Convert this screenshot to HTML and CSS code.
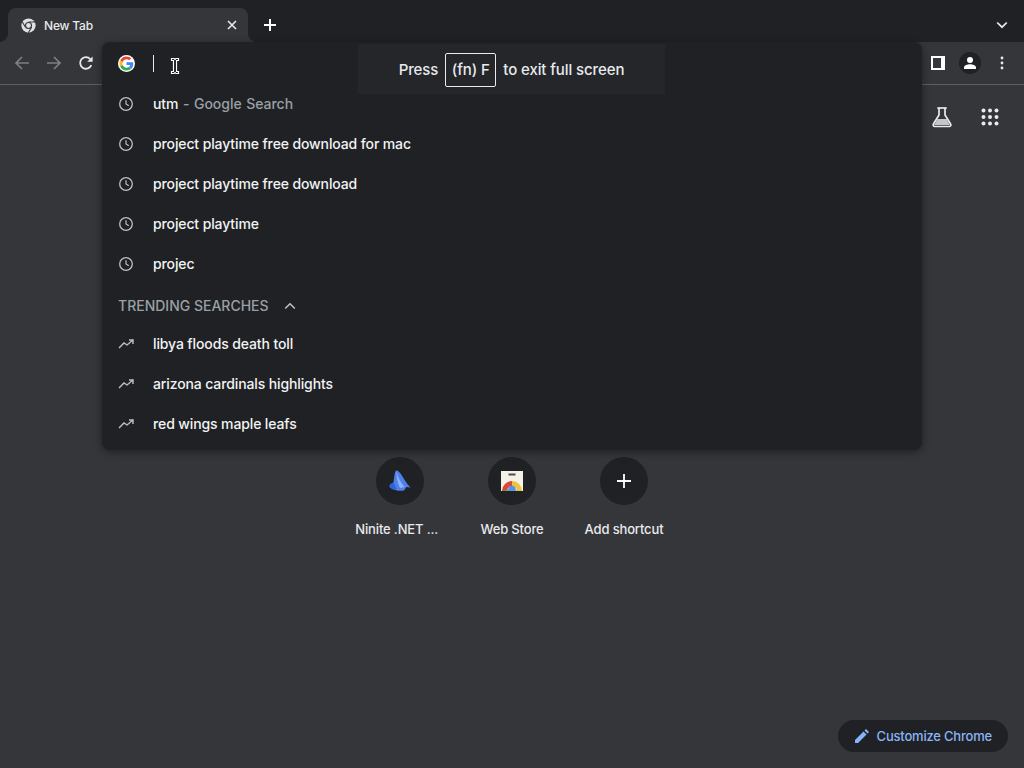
FILE: index.html
```html
<!DOCTYPE html>
<html lang="en">
<head>
<meta charset="utf-8">
<title>New Tab</title>
<link rel="stylesheet" href="styles.css">
</head>
<body>
<div class="app">
  <header class="tabstrip">
    <div class="tab">
      <svg class="tab-icon" viewBox="0 0 16 16" width="15" height="15"><circle cx="8" cy="8" r="7.6" fill="#dfe1e4"/><circle cx="8" cy="8" r="3.8" fill="#35363a"/><circle cx="8" cy="8" r="2.6" fill="#dfe1e4"/><path d="M8 4.200h7M4.700 9.900 1.300 4M11.300 9.900 7.800 15.800" stroke="#35363a" stroke-width="1.100" fill="none"/></svg>
      <span class="tab-title">New Tab</span>
      <svg class="tab-close" viewBox="0 0 10 10" width="10" height="10"><path d="M1 1l8 8M9 1l-8 8" stroke="#e8eaed" stroke-width="1.600"/></svg>
    </div>
    <svg class="new-tab" viewBox="0 0 14 14" width="14" height="14"><path d="M7 1v12M1 7h12" stroke="#fff" stroke-width="2"/></svg>
    <svg class="tab-menu" viewBox="0 0 12 8" width="12" height="8"><path d="M1.200 1.500 6 6.200l4.800-4.700" stroke="#e8eaed" stroke-width="1.700" fill="none"/></svg>
  </header>

  <nav class="toolbar">
    <div class="nav-buttons">
      <svg viewBox="0 0 16 16" width="16" height="16"><path d="M15 8H2M8 2 2 8l6 6" stroke="#7d7f83" stroke-width="1.700" fill="none"/></svg>
      <svg viewBox="0 0 16 16" width="16" height="16"><path d="M1 8h13M8 2l6 6-6 6" stroke="#7d7f83" stroke-width="1.700" fill="none"/></svg>
      <svg viewBox="0 0 16 16" width="16" height="16"><path d="M13.300 10.200A5.800 5.800 0 1 1 12.200 4" stroke="#e8eaed" stroke-width="1.800" fill="none"/><path d="M14.600 1.400v5.400H9.200z" fill="#e8eaed"/></svg>
    </div>
    <div class="toolbar-right">
      <svg viewBox="0 0 14 14" width="14" height="14"><path d="M0 0h14v14H0zM2 2v10h8V2z" fill="#fff" fill-rule="evenodd"/></svg>
      <span class="avatar">
        <svg viewBox="0 0 14 14" width="14" height="14"><circle cx="7" cy="4" r="3" fill="#fff"/><path d="M1 13v-1.500C1 9.300 4.500 8.200 7 8.200s6 1.100 6 3.300V13z" fill="#fff"/></svg>
      </span>
      <svg class="kebab" viewBox="0 0 4 14" width="4" height="14"><circle cx="2" cy="2" r="1.400" fill="#e8eaed"/><circle cx="2" cy="7" r="1.400" fill="#e8eaed"/><circle cx="2" cy="12" r="1.400" fill="#e8eaed"/></svg>
    </div>
  </nav>

  <main class="ntp">
    <div class="ntp-top">
      <svg viewBox="0 0 22 22" width="22" height="22"><path d="M8 2v7L2.400 18a1.600 1.600 0 0 0 1.400 2.500h14.400a1.600 1.600 0 0 0 1.400-2.500L14 9V2" fill="none" stroke="#e8eaed" stroke-width="1.700"/><path d="M6.300 2h9.400" stroke="#e8eaed" stroke-width="1.700"/><path d="M6.300 13h9.400l3 6H3.200z" fill="#c4c6c9"/></svg>
      <svg class="apps" viewBox="0 0 18 18" width="18" height="18"><g fill="#e8eaed"><circle cx="2.500" cy="2.500" r="2"/><circle cx="9" cy="2.500" r="2"/><circle cx="15.500" cy="2.500" r="2"/><circle cx="2.500" cy="9" r="2"/><circle cx="9" cy="9" r="2"/><circle cx="15.500" cy="9" r="2"/><circle cx="2.500" cy="15.500" r="2"/><circle cx="9" cy="15.500" r="2"/><circle cx="15.500" cy="15.500" r="2"/></g></svg>
    </div>
    <div class="shortcuts">
      <div class="shortcut">
        <span class="shortcut-circle">
          <svg viewBox="0 0 24 24" width="24" height="24"><path d="M8 1.500c1.500-.5 3.500 1 5.500 4.500 2.500 4 5 8.500 9 12.500l-4-.5-2.500 3.500c-3 .5-6 .5-8.500-.5C5 20.500 1.500 19 1.500 17c0-1.500 2-2.500 4-3.500C6 9.500 6.500 4 8 1.500z" fill="#4f7fe8"/><path d="M8.500 2c1 5 3.500 11 8 16l-4.500 1C9.500 14 8.500 8 8.500 2z" fill="#8fb2f5"/><path d="M1.500 17c1-1.500 2.500-2.500 4-3.500l3 6.500-1 .8C5 20 1.500 19 1.500 17z" fill="#2f62d8"/></svg>
        </span>
        <span class="shortcut-label">Ninite .NET ...&nbsp;&nbsp;</span>
      </div>
      <div class="shortcut">
        <span class="shortcut-circle">
          <svg viewBox="0 0 22 20" width="22" height="20"><path d="M0 0h22v20H0z" fill="#f4f1e8"/><path d="M7.500 2.500h7v2h-7z" fill="#4a4a4a"/><path d="M1 20a10 10 0 0 1 10-10v5a5 5 0 0 0-5 5z" fill="#d9483b"/><path d="M11 10a10 10 0 0 1 10 10h-5a5 5 0 0 0-5-5z" fill="#f0c33c"/><path d="M3 20l4-2 1 2z" fill="#4caf50"/><circle cx="11" cy="18.500" r="3.800" fill="#5b8def"/><path d="M5 19.500h12V20H5z" fill="#6bb26e"/></svg>
        </span>
        <span class="shortcut-label">Web Store</span>
      </div>
      <div class="shortcut">
        <span class="shortcut-circle">
          <svg viewBox="0 0 14 14" width="14" height="14"><path d="M7 0v14M0 7h14" stroke="#fff" stroke-width="1.800"/></svg>
        </span>
        <span class="shortcut-label">Add shortcut</span>
      </div>
    </div>
    <div class="customize">
      <svg viewBox="0 0 14 14" width="14" height="14"><path d="M0 14v-3L8.500 2.500l3 3L3 14zM9.500 1.500 11 0l3 3-1.500 1.500z" fill="#8ab4f8"/></svg>
      <span>Customize Chrome</span>
    </div>
  </main>

  <section class="omnibox">
    <div class="omni-input">
      <svg class="g-logo" viewBox="-5 -5 58 58" width="17" height="17"><circle cx="24" cy="24" r="29" fill="#fff"/><path fill="#EA4335" d="M24 9.500c3.540 0 6.710 1.220 9.210 3.600l6.850-6.850C35.900 2.380 30.470 0 24 0 14.620 0 6.510 5.380 2.560 13.220l7.980 6.190C12.430 13.720 17.740 9.500 24 9.500z"/><path fill="#4285F4" d="M46.980 24.550c0-1.570-.15-3.090-.38-4.550H24v9.020h12.940c-.58 2.960-2.260 5.480-4.780 7.180l7.730 6c4.510-4.180 7.090-10.360 7.090-17.650z"/><path fill="#FBBC05" d="M10.530 28.590c-.48-1.450-.76-2.990-.76-4.590s.27-3.140.76-4.590l-7.980-6.190C.92 16.460 0 20.120 0 24c0 3.880.92 7.540 2.560 10.780l7.970-6.190z"/><path fill="#34A853" d="M24 48c6.480 0 11.930-2.130 15.890-5.810l-7.730-6c-2.150 1.450-4.920 2.300-8.160 2.300-6.260 0-11.570-4.220-13.470-9.910l-7.980 6.190C6.510 42.620 14.620 48 24 48z"/></svg>
      <span class="caret"></span>
    </div>
    <ul class="results">
      <li class="result"><svg class="clock" viewBox="0 0 16 16" width="16" height="16"><use href="#clock-shape"/></svg><span>utm <span class="dim">- Google Search</span></span></li>
      <li class="result"><svg class="clock" viewBox="0 0 16 16" width="16" height="16"><use href="#clock-shape"/></svg><span>project playtime free download for mac</span></li>
      <li class="result"><svg class="clock" viewBox="0 0 16 16" width="16" height="16"><use href="#clock-shape"/></svg><span>project playtime free download</span></li>
      <li class="result"><svg class="clock" viewBox="0 0 16 16" width="16" height="16"><use href="#clock-shape"/></svg><span>project playtime</span></li>
      <li class="result"><svg class="clock" viewBox="0 0 16 16" width="16" height="16"><use href="#clock-shape"/></svg><span>projec</span></li>
    </ul>
    <div class="section-head">
      <span>TRENDING SEARCHES</span>
      <svg viewBox="0 0 12 8" width="12" height="8"><path d="M1.200 6.500 6 1.800l4.800 4.700" stroke="#bdc1c6" stroke-width="1.600" fill="none"/></svg>
    </div>
    <ul class="results">
      <li class="result"><svg class="trend" viewBox="0 0 16 16" width="16" height="16"><use href="#trend-shape"/></svg><span>libya floods death toll</span></li>
      <li class="result"><svg class="trend" viewBox="0 0 16 16" width="16" height="16"><use href="#trend-shape"/></svg><span>arizona cardinals highlights</span></li>
      <li class="result"><svg class="trend" viewBox="0 0 16 16" width="16" height="16"><use href="#trend-shape"/></svg><span>red wings maple leafs</span></li>
    </ul>
  </section>

  <svg class="cursor" viewBox="0 0 10 18" width="10" height="18"><path d="M1.500 1.500h2.500L5 2.500l1-1h2.500v2H6.500v11h2v2H6l-1-1-1 1H1.500v-2h2v-11h-2z" fill="#111" stroke="#fff" stroke-width="1.200"/></svg>

  <div class="toast">
    <span>Press</span>
    <span class="key">(fn) F</span>
    <span>to exit full screen</span>
  </div>
</div>

<svg class="defs" width="0" height="0" aria-hidden="true">
  <defs>
    <g id="clock-shape"><circle cx="8" cy="8" r="6.300" fill="none" stroke="#bdc1c6" stroke-width="1.300"/><path d="M8 4.200V8l2.800 1.800" fill="none" stroke="#bdc1c6" stroke-width="1.200"/></g>
    <g id="trend-shape"><path d="M1 12l5-5 3 2 6-5" fill="none" stroke="#bdc1c6" stroke-width="1.400"/><path d="M11 4h4v4" fill="none" stroke="#bdc1c6" stroke-width="1.400"/></g>
  </defs>
</svg>
</body>
</html>
```

FILE: styles.css
```css
* { box-sizing: border-box; }
html, body { margin: 0; height: 100%; }
body {
  background: #35363a;
  color: #e8eaed;
  font-family: Inter, "Liberation Sans", sans-serif;
  font-weight: 450;
  overflow: hidden;
}
ul { list-style: none; margin: 0; padding: 0; }
svg { display: block; flex: none; }
.defs { position: absolute; }

.app {
  position: relative;
  width: 1024px;
  height: 768px;
  display: flex;
  flex-direction: column;
}

.tabstrip {
  height: 42px;
  background: #202124;
  display: flex;
  align-items: flex-end;
  padding-left: 8px;
}
.tab {
  position: relative;
  width: 240px;
  height: 34px;
  background: #35363a;
  border-radius: 8px 8px 0 0;
  display: flex;
  align-items: center;
  padding: 0 11px 0 13px;
  font-size: 12px;
  letter-spacing: -0.2px;
}
.tab::before,
.tab::after {
  content: "";
  position: absolute;
  bottom: 0;
  width: 8px;
  height: 8px;
}
.tab::before {
  left: -8px;
  background: radial-gradient(circle at 0 0, #202124 7.5px, #35363a 8px);
}
.tab::after {
  right: -8px;
  background: radial-gradient(circle at 100% 0, #202124 7.5px, #35363a 8px);
}
.tab-icon { margin-right: 8px; }
.tab-title { flex: 1; color: #e8eaed; }
.new-tab { margin: 0 0 10px 15px; }
.tab-menu { margin: 0 16px 13px auto; }

.toolbar {
  height: 43px;
  background: #35363a;
  border-bottom: 1px solid #5f6063;
  display: flex;
  align-items: center;
  justify-content: space-between;
  padding: 0 20px 0 14px;
}
.nav-buttons { display: flex; gap: 16px; }
.toolbar-right { display: flex; align-items: center; }
.avatar {
  width: 22px;
  height: 22px;
  margin: 0 19px 0 14px;
  border-radius: 50%;
  background: #202124;
  display: flex;
  align-items: center;
  justify-content: center;
}

.ntp {
  flex: 1;
  display: flex;
  flex-direction: column;
  align-items: center;
  background: #35363a;
}
.ntp-top {
  align-self: flex-end;
  display: flex;
  align-items: center;
  gap: 28px;
  padding: 21px 25px 0 0;
}
.shortcuts {
  display: flex;
  margin-top: 329px;
}
.shortcut {
  width: 112px;
  display: flex;
  flex-direction: column;
  align-items: center;
  gap: 16px;
}
.shortcut-circle {
  width: 48px;
  height: 48px;
  border-radius: 50%;
  background: #202124;
  display: flex;
  align-items: center;
  justify-content: center;
}
.shortcut-label {
  font-size: 13px;
  line-height: 16px;
  letter-spacing: -0.15px;
  color: #e8eaed;
  white-space: nowrap;
}
.customize {
  align-self: flex-end;
  margin: auto 16px 16px 0;
  height: 32px;
  padding: 0 16px 0 17px;
  border-radius: 16px;
  background: #202124;
  color: #8ab4f8;
  font-size: 13px;
  letter-spacing: -0.2px;
  display: flex;
  align-items: center;
  gap: 8px;
}

.omnibox {
  position: absolute;
  left: 102px;
  top: 42px;
  width: 820px;
  height: 408px;
  background: #202124;
  border-radius: 8px;
  box-shadow: 0 2px 8px rgba(0, 0, 0, 0.4);
}
.omni-input {
  height: 42px;
  display: flex;
  align-items: center;
  padding-left: 16px;
}
.caret {
  width: 1px;
  height: 17px;
  margin-left: 18px;
  background: #e8eaed;
}
.results:first-of-type { margin-top: -1px; }
.result {
  height: 40px;
  display: flex;
  align-items: center;
  padding-left: 16px;
  font-size: 14px;
  letter-spacing: -0.12px;
  color: #f1f3f4;
}
.result > svg { margin: 2px 19px 0 0; }
.dim {
  margin-left: 1px;
  color: #9aa0a6;
  letter-spacing: -0.04px;
  word-spacing: 1px;
}
.section-head {
  height: 40px;
  display: flex;
  align-items: center;
  gap: 15px;
  padding: 5px 0 0 16px;
  font-size: 14px;
  color: #9aa0a6;
}

.cursor {
  position: absolute;
  left: 170px;
  top: 57px;
}

.toast {
  position: absolute;
  left: 358px;
  top: 44px;
  width: 307px;
  height: 50px;
  padding-top: 1px;
  background: #24262a;
  display: flex;
  align-items: center;
  justify-content: center;
  gap: 7px;
  font-size: 15px;
  letter-spacing: -0.1px;
  color: #e8eaed;
}
.key {
  height: 34px;
  padding: 0 5.5px;
  border: 1px solid #e8eaed;
  border-radius: 2px;
  display: flex;
  align-items: center;
}
```
